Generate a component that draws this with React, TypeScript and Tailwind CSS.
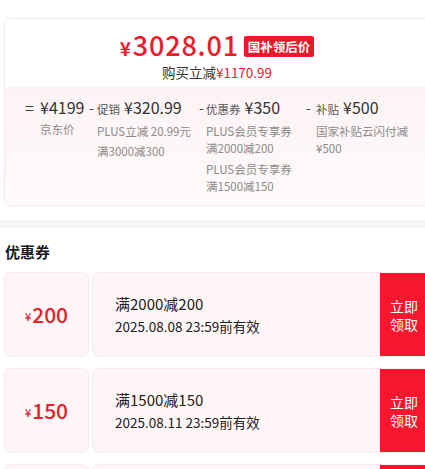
import React from "react";

const coupons = [
  { amount: "200", title: "满2000减200", date: "2025.08.08 23:59前有效" },
  { amount: "150", title: "满1500减150", date: "2025.08.11 23:59前有效" },
];

export default function App() {
  return (
    <div
      className="w-[425px] h-[469px] overflow-hidden bg-white text-[#333]"
      style={{ fontFamily: '"Noto Sans CJK SC", "Noto Sans", sans-serif' }}
    >
      <div className="w-[434px] px-1 pt-[18px]">
        {/* Price card */}
        <div className="rounded-[6px] border border-[#efeaea] overflow-hidden">
          <div className="bg-white pt-[13px] pb-[6px]">
            <div className="h-[28px] flex items-center justify-center gap-[5px]">
              <div className="flex items-baseline text-[#ec1c2b] font-medium leading-[28px]">
                <span className="text-[19px] font-bold mr-[2px]">¥</span>
                <span className="text-[27px] tracking-[0.8px]">3028.01</span>
              </div>
              <span className="h-[21px] px-[4px] rounded-[2px] bg-[#e8192c] text-white text-[12.5px] font-bold leading-[21px]">
                国补领后价
              </span>
            </div>
            <div className="mt-[3px] h-[18px] text-center text-[13.5px] leading-[18px]">
              <span className="text-[#333]">购买立减</span>
              <span className="text-[#e8192c]">¥1170.99</span>
            </div>
          </div>

          <div className="bg-gradient-to-b from-[#fdf3f4] to-[#fffafa] pl-[20px] pt-[10px] pb-[10px] flex">
            {/* col 1 */}
            <div className="w-[64px] flex">
              <span className="w-[15px] text-[16px] leading-[20px] text-[#444]">=</span>
              <div className="flex flex-col">
                <span className="text-[16px] leading-[20px] text-[#333]">¥4199</span>
                <span className="mt-[4px] text-[11.5px] leading-[17px] text-[#8a8a8a]">京东价</span>
              </div>
            </div>
            {/* col 2 */}
            <div className="w-[110px] flex">
              <span className="w-[8px] text-[14px] leading-[20px] text-[#444]">-</span>
              <div className="flex flex-col">
                <div className="flex items-baseline leading-[20px]">
                  <span className="text-[11.5px] text-[#555]">促销</span>
                  <span className="ml-[4px] text-[16px] text-[#333]">¥320.99</span>
                </div>
                <span className="mt-[4px] text-[11.5px] leading-[17px] text-[#8a8a8a] whitespace-nowrap">PLUS立减 20.99元</span>
                <span className="mt-[3px] text-[11.5px] leading-[17px] text-[#8a8a8a]">满3000减300</span>
              </div>
            </div>
            {/* col 3 */}
            <div className="w-[107px] flex">
              <span className="w-[7px] text-[14px] leading-[20px] text-[#444]">-</span>
              <div className="flex flex-col">
                <div className="flex items-baseline leading-[20px]">
                  <span className="text-[11.5px] text-[#555]">优惠券</span>
                  <span className="ml-[4px] text-[16px] text-[#333]">¥350</span>
                </div>
                <span className="mt-[4px] w-[88px] text-[11.5px] leading-[17px] text-[#8a8a8a]">PLUS会员专享券满2000减200</span>
                <span className="mt-[4px] w-[88px] text-[11.5px] leading-[17px] text-[#8a8a8a]">PLUS会员专享券满1500减150</span>
              </div>
            </div>
            {/* col 4 */}
            <div className="flex">
              <span className="w-[10px] text-[14px] leading-[20px] text-[#444]">-</span>
              <div className="flex flex-col">
                <div className="flex items-baseline leading-[20px]">
                  <span className="text-[11.5px] text-[#555]">补贴</span>
                  <span className="ml-[4px] text-[16px] text-[#333]">¥500</span>
                </div>
                <span className="mt-[4px] w-[94px] text-[11.5px] leading-[17px] text-[#8a8a8a]">国家补贴云闪付减¥500</span>
              </div>
            </div>
          </div>
        </div>
      </div>

      {/* separator band */}
      <div className="mt-[14px] h-[8px] bg-[#f7f6f6]" />

      <div className="w-[432px] px-1">
        <div className="mt-[13px] pl-[1px] text-[15px] font-bold leading-[21px] text-[#1a1a1a]">优惠券</div>

        <div className="mt-[10px] flex flex-col gap-[11px]">
          {coupons.map((c) => (
            <div key={c.amount} className="flex h-[85px]">
              <div className="w-[85px] shrink-0 rounded-[6px] bg-[#fdf5f6] border border-[#f8ecee] flex items-center justify-center text-[#e1232e]">
                <span className="text-[11px] font-medium mt-[4px] mr-[1px]">¥</span>
                <span className="text-[21px] font-medium leading-none">{c.amount}</span>
              </div>
              <div className="ml-[3px] flex-1 flex rounded-l-[6px] bg-[#fdf5f6] border border-r-0 border-[#f8ecee] overflow-hidden">
                <div className="flex-1 pl-[22px] flex flex-col justify-center">
                  <span className="text-[15px] leading-[23px] text-[#222]">{c.title}</span>
                  <span className="text-[13.5px] leading-[23px] text-[#222]">{c.date}</span>
                </div>
                <div className="w-[48px] -my-px bg-[#f7172c] flex items-center justify-center">
                  <span className="text-[14px] leading-[18px] text-white text-center w-[30px]">立即领取</span>
                </div>
              </div>
            </div>
          ))}
          {/* next coupon, only its top edge is in view */}
          <div className="flex h-[85px]">
            <div className="w-[85px] shrink-0 rounded-[6px] bg-[#fdf5f6] border border-[#f8ecee]" />
            <div className="ml-[3px] flex-1 flex rounded-l-[6px] bg-[#fdf5f6] border border-r-0 border-[#f8ecee] overflow-hidden">
              <div className="flex-1" />
              <div className="w-[48px] -my-px bg-[#f7172c]" />
            </div>
          </div>
        </div>
      </div>
    </div>
  );
}
